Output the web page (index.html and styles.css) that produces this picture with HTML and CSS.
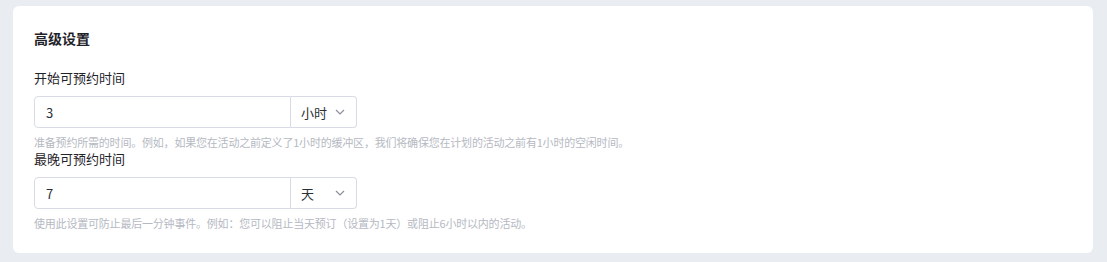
FILE: index.html
```html
<!DOCTYPE html>
<html lang="zh-CN">
<head>
    <meta charset="UTF-8">
    <meta name="viewport" content="width=device-width, initial-scale=1.0">
    <title>高级设置</title>
    <link rel="stylesheet" href="styles.css">
</head>
<body>
    <div class="settings-card">
        <div class="card-title">高级设置</div>

        <!-- Start booking time -->
        <div class="field">
            <label class="field-label">开始可预约时间</label>
            <div class="input-group">
                <input class="num-input" type="text" value="3">
                <div class="unit-select">
                    <span>小时</span>
                    <svg class="chevron" width="10" height="6" viewBox="0 0 10 6"><path d="M1 1l4 4 4-4" fill="none" stroke="#8a8f99" stroke-width="1.2"/></svg>
                </div>
            </div>
            <div class="field-help">准备预约所需的时间。例如，如果您在活动之前定义了1小时的缓冲区，我们将确保您在计划的活动之前有1小时的空闲时间。</div>
        </div>

        <!-- Latest booking time -->
        <div class="field">
            <label class="field-label">最晚可预约时间</label>
            <div class="input-group">
                <input class="num-input" type="text" value="7">
                <div class="unit-select">
                    <span>天</span>
                    <svg class="chevron" width="10" height="6" viewBox="0 0 10 6"><path d="M1 1l4 4 4-4" fill="none" stroke="#8a8f99" stroke-width="1.2"/></svg>
                </div>
            </div>
            <div class="field-help">使用此设置可防止最后一分钟事件。例如：您可以阻止当天预订（设置为1天）或阻止6小时以内的活动。</div>
        </div>
    </div>
</body>
</html>
```

FILE: styles.css
```css
body {
    margin: 0;
    padding: 6px 14px 9px 13px;
    background-color: #e9ecf1;
    font-family: 'Noto Sans CJK SC', 'Noto Sans', sans-serif;
    color: #1f2329;
}

.settings-card {
    background: #ffffff;
    border-radius: 6px;
    padding: 21px 21px 23px 21px;
}

.card-title {
    font-size: 14px;
    font-weight: bold;
    line-height: 22px;
    margin-bottom: 19px;
}

.field-label {
    display: block;
    font-size: 13px;
    line-height: 20px;
    margin-bottom: 8px;
}

.input-group {
    display: flex;
    width: 323px;
    height: 32px;
}

.num-input {
    flex: 1;
    min-width: 0;
    height: 32px;
    box-sizing: border-box;
    border: 1px solid #d8dbe5;
    border-radius: 4px 0 0 4px;
    padding: 0 11px;
    font-family: inherit;
    font-size: 13px;
    color: #2b2f36;
    outline: none;
}

.unit-select {
    width: 66px;
    height: 32px;
    box-sizing: border-box;
    border: 1px solid #d8dbe5;
    border-left: none;
    border-radius: 0 4px 4px 0;
    display: flex;
    align-items: center;
    justify-content: space-between;
    padding: 0 11px 0 10px;
    font-size: 13px;
    color: #2b2f36;
}

.field-help {
    font-size: 11px;
    line-height: 14px;
    letter-spacing: -0.2px;
    color: #b5b9c2;
    margin-top: 7px;
}
```
